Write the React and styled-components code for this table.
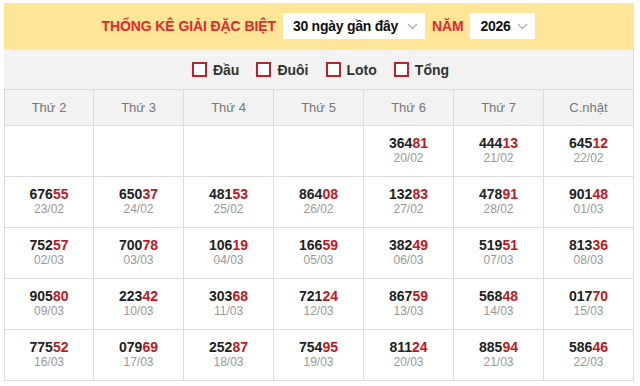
import React from 'react'
import styled, { createGlobalStyle } from 'styled-components'

const GlobalStyle = createGlobalStyle`
    body {
        margin: 0;
        font-family: "Liberation Sans", Arial, sans-serif;
        background: #fff;
    }
`

const days = ['Thứ 2', 'Thứ 3', 'Thứ 4', 'Thứ 5', 'Thứ 6', 'Thứ 7', 'C.nhật']

const rows = [
    [null, null, null, null, ['36481', '20/02'], ['44413', '21/02'], ['64512', '22/02']],
    [['67655', '23/02'], ['65037', '24/02'], ['48153', '25/02'], ['86408', '26/02'], ['13283', '27/02'], ['47891', '28/02'], ['90148', '01/03']],
    [['75257', '02/03'], ['70078', '03/03'], ['10619', '04/03'], ['16659', '05/03'], ['38249', '06/03'], ['51951', '07/03'], ['81336', '08/03']],
    [['90580', '09/03'], ['22342', '10/03'], ['30368', '11/03'], ['72124', '12/03'], ['86759', '13/03'], ['56848', '14/03'], ['01770', '15/03']],
    [['77552', '16/03'], ['07969', '17/03'], ['25287', '18/03'], ['75495', '19/03'], ['81124', '20/03'], ['88594', '21/03'], ['58646', '22/03']],
]

const filters = ['Đầu', 'Đuôi', 'Loto', 'Tổng']

function Chevron() {
    return (
        <svg width="11" height="7" viewBox="0 0 11 7">
            <polyline points="1,1 5.5,5.5 10,1" fill="none" stroke="#aaa" strokeWidth="1.2" />
        </svg>
    )
}

function App() {
    return (
        <Page>
            <GlobalStyle />
            <Box>
                <TopBar>
                    <Title>THỐNG KÊ GIẢI ĐẶC BIỆT</Title>
                    <Select width={142}><span>30 ngày gần đây</span><Chevron /></Select>
                    <Title>NĂM</Title>
                    <Select width={65}><span>2026</span><Chevron /></Select>
                </TopBar>
                <FilterBar>
                    {filters.map(f => (
                        <Check key={f}>
                            <Square />
                            {f}
                        </Check>
                    ))}
                </FilterBar>
                <Grid>
                    {days.map(d => <HeadCell key={d}>{d}</HeadCell>)}
                    {rows.map((row, i) => row.map((c, j) => (
                        <Cell key={i + '-' + j}>
                            {c && <>
                                <Num>{c[0].slice(0, 3)}<Red>{c[0].slice(3)}</Red></Num>
                                <Date>{c[1]}</Date>
                            </>}
                        </Cell>
                    )))}
                </Grid>
            </Box>
        </Page>
    )
}

const Page = styled.div`
    padding: 3px 6px 0 4px;
`

const Box = styled.div`
    width: 630px;
`

const TopBar = styled.div`
    height: 46px;
    background: #fee597;
    display: flex;
    align-items: center;
    justify-content: center;
    gap: 6px;
    box-sizing: border-box;
`

const Title = styled.div`
    color: #e8272a;
    font-weight: bold;
    font-size: 14px;
    letter-spacing: -0.1px;
    margin-right: 1px;
`

const Select = styled.div`
    width: ${p => p.width}px;
    height: 26px;
    background: #fff;
    box-sizing: border-box;
    display: flex;
    align-items: center;
    justify-content: space-between;
    padding: 0 7px 0 10px;
    margin-right: 1px;
    font-size: 14px;
    font-weight: bold;
    letter-spacing: -0.25px;
    color: #111;
`

const FilterBar = styled.div`
    height: 40px;
    background: #f2f2f2;
    border-top: 1px solid #e6e6e6;
    border-right: 1px solid #ddd;
    box-sizing: border-box;
    display: flex;
    align-items: center;
    justify-content: center;
    gap: 17px;
    padding-left: 4px;
`

const Check = styled.div`
    display: flex;
    align-items: center;
    gap: 6px;
    font-size: 14px;
    font-weight: bold;
    color: #333;
`

const Square = styled.span`
    width: 15px;
    height: 15px;
    box-sizing: border-box;
    border: 2px solid #c0202e;
    background: #fff;
`

const Grid = styled.div`
    display: grid;
    grid-template-columns: 89px repeat(6, 90px);
    grid-auto-rows: 51px;
    grid-template-rows: 36px;
    border-left: 1px solid #ddd;
    border-top: 1px solid #ddd;
`

const HeadCell = styled.div`
    background: #f2f2f2;
    border-right: 1px solid #ddd;
    border-bottom: 1px solid #ddd;
    display: flex;
    align-items: center;
    justify-content: center;
    font-size: 13px;
    color: #777;
`

const Cell = styled.div`
    border-right: 1px solid #ddd;
    border-bottom: 1px solid #ddd;
    display: flex;
    flex-direction: column;
    align-items: center;
    justify-content: center;
    padding-bottom: 2px;
`

const Num = styled.div`
    font-size: 14px;
    font-weight: bold;
    color: #222;
    line-height: 16px;
`

const Red = styled.span`
    color: #c4161c;
`

const Date = styled.div`
    font-size: 12px;
    color: #999;
    line-height: 14px;
`

export default App
